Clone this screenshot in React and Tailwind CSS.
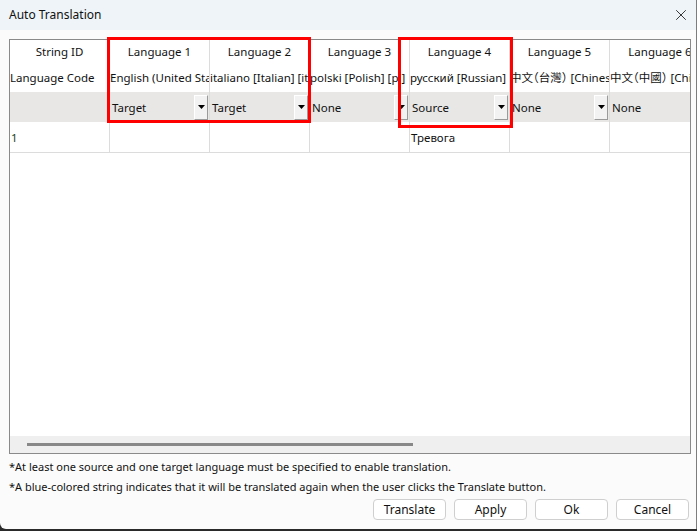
import { X } from 'lucide-react';

const font = { fontFamily: '"Noto Sans", "Noto Sans CJK TC", sans-serif' };

const columns = [
  { title: 'Language 1', code: 'English (United States) [en-US]', mode: 'Target', value: '' },
  { title: 'Language 2', code: 'italiano [Italian] [it]', mode: 'Target', value: '' },
  { title: 'Language 3', code: 'polski [Polish] [pl]', mode: 'None', value: '' },
  { title: 'Language 4', code: 'русский [Russian] [ru]', mode: 'Source', value: 'Тревога' },
  { title: 'Language 5', code: '中文（台灣） [Chinese (Taiwan)]', mode: 'None', value: '' },
  { title: 'Language 6', code: '中文（中國） [Chinese (PRC)]', mode: 'None', value: '' },
];

function DropArrow() {
  return (
    <div className="w-[14px] h-[25px] shrink-0 bg-[#f2f2f2] border-l border-t border-l-white border-t-white border-r border-b border-r-[#9a9a9a] border-b-[#9a9a9a] flex items-center justify-center">
      <svg width="7" height="4" viewBox="0 0 7 4"><path d="M0 0h7L3.5 4z" fill="#000" /></svg>
    </div>
  );
}

function Column({ col, last }) {
  return (
    <div className={`w-[100px] shrink-0 flex flex-col ${last ? '' : 'border-r border-[#dcdcdc]'}`}>
      <div className="h-[24px] flex items-center justify-center whitespace-nowrap overflow-hidden">{col.title}</div>
      <div className="h-[28px] flex items-center whitespace-nowrap overflow-hidden [font-feature-settings:'halt']">{col.code}</div>
      <div className="h-[30px] bg-[#e8e7e5] flex items-center justify-between pl-[2px] pr-[1px]">
        <span className="pt-[2px]">{col.mode}</span>
        {!last && <DropArrow />}
      </div>
      <div className="h-[30px] flex items-center pl-[1px] pt-[2px] whitespace-nowrap">{col.value}</div>
    </div>
  );
}

export default function App() {
  return (
    <div className="w-[697px] h-[531px] bg-[#2a2a2a] text-[11.5px] text-[#111]" style={font}>
      <div className="relative w-[697px] h-[529px] bg-[#fbfbfb] rounded-bl-[6px] border-r border-[#7d7d7d] flex flex-col">
        <div className="h-[30px] bg-[#eef4f8] flex items-center justify-between pl-[9px] pr-[6px] text-[12px]">
          <span>Auto Translation</span>
          <X size={18} strokeWidth={1.2} className="text-[#222]" />
        </div>

        <div className="ml-[9px] mt-[9px] w-[682px] h-[415px] border border-[#8a8a8a] bg-white flex flex-col overflow-hidden">
          <div className="flex shrink-0 border-b border-[#dcdcdc] overflow-hidden">
            <div className="w-[100px] shrink-0 flex flex-col border-r border-[#dcdcdc]">
              <div className="h-[24px] flex items-center justify-center">String ID</div>
              <div className="h-[28px] flex items-center whitespace-nowrap">Language Code</div>
              <div className="h-[30px] bg-[#e8e7e5]" />
              <div className="h-[30px] flex items-center pl-[1px] pt-[2px] text-[#1d3d1d]">1</div>
            </div>
            {columns.map((c, i) => (
              <Column key={c.title} col={c} last={i === columns.length - 1} />
            ))}
          </div>
          <div className="flex-1" />
          <div className="h-[17px] bg-[#efefef] flex items-center pl-[17px]">
            <div className="w-[386px] h-[3px] bg-[#888]" />
          </div>
        </div>

        <div className="pl-[9px] pt-[5px] flex flex-col gap-[4px] leading-[16px] text-[11px]">
          <p>*At least one source and one target language must be specified to enable translation.</p>
          <p>*A blue-colored string indicates that it will be translated again when the user clicks the Translate button.</p>
        </div>

        <div className="flex justify-end gap-[8px] pr-[7px] mt-[4px]">
          {['Translate', 'Apply', 'Ok', 'Cancel'].map((b) => (
            <button key={b} className="w-[73px] h-[21px] bg-white border border-[#cfcfcf] rounded-[4px] flex items-center justify-center text-[12px]">
              {b}
            </button>
          ))}
        </div>

        <div className="absolute left-[107px] top-[37px] w-[204px] h-[86px] border-[3px] border-[#ff0000] pointer-events-none" />
        <div className="absolute left-[398px] top-[37px] w-[115px] h-[91px] border-[3px] border-[#ff0000] pointer-events-none" />
      </div>
    </div>
  );
}
